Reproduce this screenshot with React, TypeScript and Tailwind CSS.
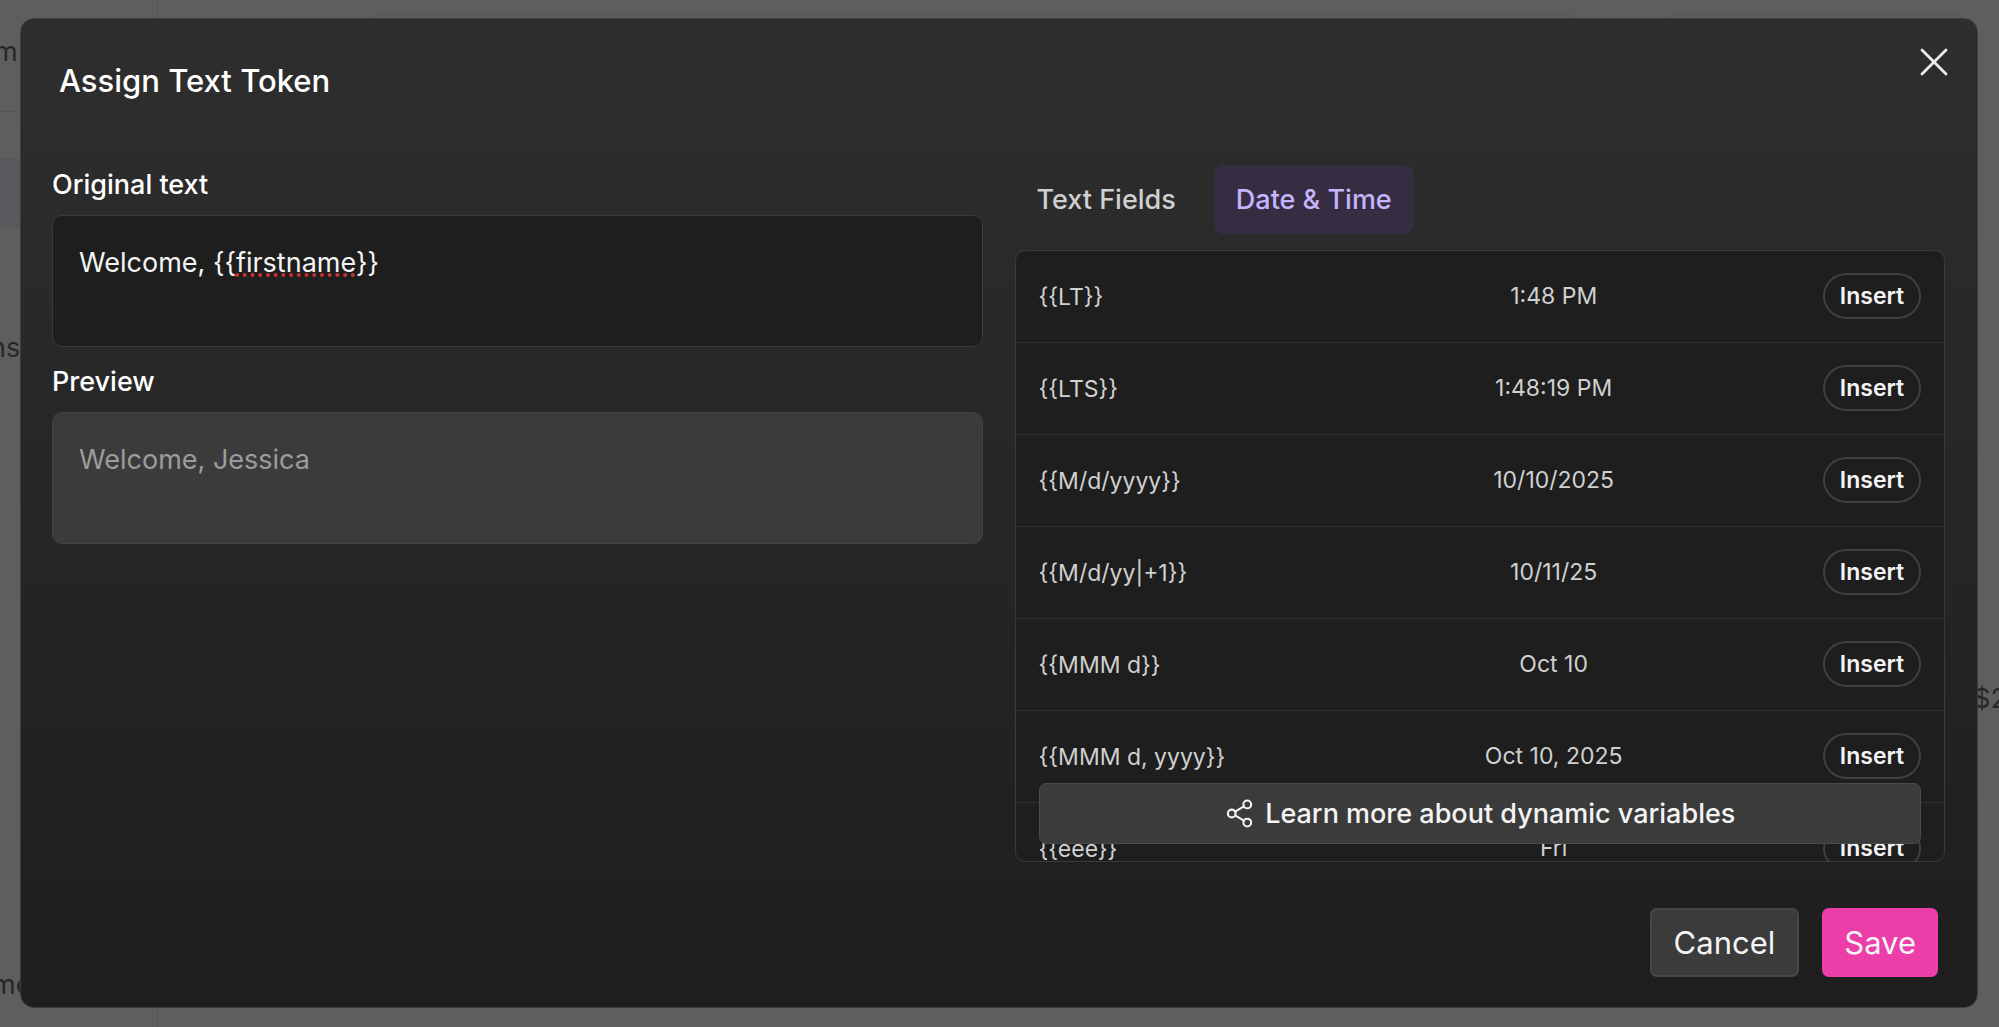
import React, { useState } from 'react';
import { Share2, X } from 'lucide-react';

const tokens = [
  { token: '{{LT}}', value: '1:48 PM' },
  { token: '{{LTS}}', value: '1:48:19 PM' },
  { token: '{{M/d/yyyy}}', value: '10/10/2025' },
  { token: '{{M/d/yy|+1}}', value: '10/11/25' },
  { token: '{{MMM d}}', value: 'Oct 10' },
  { token: '{{MMM d, yyyy}}', value: 'Oct 10, 2025' },
  { token: '{{eee}}', value: 'Fri' },
];

const tabs = ['Text Fields', 'Date & Time'];

// Dimmed page behind the dialog
const Backdrop: React.FC = () => (
  <div className="flex h-full bg-[#5e5e5e] text-[27px] leading-9 text-[#27272a]" aria-hidden="true">
    <aside className="flex w-[158px] shrink-0 flex-col border-r border-[#575757]">
      <div className="h-28 border-b border-[#575757] pt-[34px]">
        <span className="-ml-1.5">m</span>
      </div>
      <div className="mt-[46px] h-[69px] bg-[#58595c]" />
      <div className="mt-[103px]">
        <span className="-ml-2.5">ns</span>
      </div>
      <div className="mt-auto pb-6">
        <span className="-ml-2">me</span>
      </div>
    </aside>
    <main className="flex min-w-0 flex-1 flex-col justify-between pt-3.5 pr-6 pl-[200px]">
      <div className="flex gap-16">
        <div className="h-20 flex-1 rounded-3xl border border-[#575757]" />
        <div className="h-20 w-[322px] rounded-3xl border border-[#575757]" />
      </div>
      <div className="-mr-8 self-end pb-[310px]">$2</div>
    </main>
  </div>
);

const App: React.FC = () => {
  const [activeTab, setActiveTab] = useState('Date & Time');
  const [text, setText] = useState('Welcome, {{firstname}}');

  return (
    <div className="relative h-screen overflow-hidden font-['Inter',sans-serif]">
      <Backdrop />

      <div className="absolute inset-0 flex pt-[18px] pr-[21px] pb-[19px] pl-5">
        <div
          role="dialog"
          aria-labelledby="dialog-title"
          className="relative flex flex-1 flex-col rounded-[14px] border border-[#3d3d3d] bg-linear-to-b from-[#2e2e2e] to-[#1e1e1e] pr-8 pb-[30px] pl-[31px]"
        >
          <h2 id="dialog-title" className="px-[7px] pt-[42px] text-[31px] leading-10 font-medium text-white">
            Assign Text Token
          </h2>
          <button aria-label="Close" className="absolute top-[19px] right-[19px] text-[#ededed]">
            <X className="size-12" strokeWidth={1.4} />
          </button>

          <div className="mt-16 grid min-h-0 flex-1 grid-cols-2 gap-8">
            {/* Text and preview */}
            <div>
              <label htmlFor="original" className="mb-3 block pt-0.5 text-[27px] leading-9 font-medium text-white">
                Original text
              </label>
              <div className="relative">
                <textarea
                  id="original"
                  spellCheck={false}
                  value={text}
                  onChange={(e) => setText(e.target.value)}
                  className="block h-[132px] w-full resize-none rounded-[10px] border border-[#3b3b3b] bg-[#1e1e1e] px-[26px] pt-[29px] text-[27px] leading-9 text-[#f4f4f4] outline-none"
                />
                <span className="pointer-events-none absolute top-[58px] left-[183px] w-[120px] border-b-4 border-dotted border-[#c8322b]" />
              </div>

              <label htmlFor="preview" className="mt-[15px] mb-3 block pt-0.5 text-[27px] leading-9 font-medium text-white">
                Preview
              </label>
              <textarea
                id="preview"
                readOnly
                value="Welcome, Jessica"
                className="block h-[132px] w-full resize-none rounded-[10px] border border-[#424242] bg-[#3b3b3b] px-[26px] pt-[29px] text-[27px] leading-9 text-[#9c9c9c] outline-none"
              />
            </div>

            {/* Tokens */}
            <div className="flex min-h-0 flex-col">
              <div role="tablist" className="mb-4 flex gap-4">
                {tabs.map((tab) => (
                  <button
                    key={tab}
                    role="tab"
                    aria-selected={tab === activeTab}
                    onClick={() => setActiveTab(tab)}
                    className={`h-[69px] rounded-[10px] px-[22px] text-[27px] leading-9 font-medium ${
                      tab === activeTab ? 'bg-[#362d42] text-[#c4b5fd]' : 'text-[#d0d0d0]'
                    }`}
                  >
                    {tab}
                  </button>
                ))}
              </div>

              <div className="relative min-h-0 flex-1 overflow-hidden rounded-[10px] border border-[#3b3b3b] bg-[#1e1e1e]">
                <table className="-mt-px w-full table-fixed text-[23px] leading-8 text-[#d0d0d0]">
                  <tbody>
                    {tokens.map(({ token, value }) => (
                      <tr key={token} className="h-[92px] border-b border-[#2f2f2f]">
                        <td className="w-[31%] pt-0.5 pl-[23px] whitespace-nowrap">{token}</td>
                        <td className="text-center">{value}</td>
                        <td className="w-[140px] pr-[23px] text-right">
                          <button className="h-[46px] w-[98px] rounded-full border-2 border-[#404040] font-semibold text-[#f4f4f4]">
                            Insert
                          </button>
                        </td>
                      </tr>
                    ))}
                  </tbody>
                </table>
                <a
                  href="#"
                  className="absolute right-[23px] bottom-[17px] left-[23px] flex h-[61px] items-center justify-center gap-2.5 rounded-[7px] border border-[#4a4a4a] bg-[#3b3b3b] text-[27px] leading-9 font-medium text-[#f4f4f4]"
                >
                  <Share2 className="size-[31px]" strokeWidth={1.6} />
                  Learn more about dynamic variables
                </a>
              </div>
            </div>
          </div>

          {/* Footer */}
          <div className="mt-[46px] flex justify-end gap-[23px] pr-[7px]">
            <button className="h-[69px] rounded-[7px] border-2 border-[#474747] bg-[#3b3b3b] px-[22px] text-[31px] leading-10 text-[#f4f4f4]">
              Cancel
            </button>
            <button className="h-[69px] rounded-[7px] bg-[#ec3ea8] px-[22px] text-[31px] leading-10 text-[#f4f4f4]">
              Save
            </button>
          </div>
        </div>
      </div>
    </div>
  );
};

export default App;
